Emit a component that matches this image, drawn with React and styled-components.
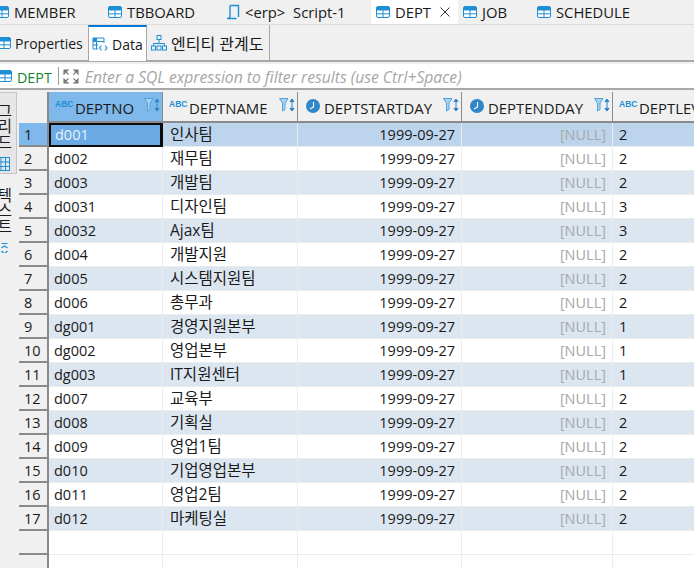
import React from "react";
import styled, { createGlobalStyle } from "styled-components";

const FONT = `"Open Sans", "Noto Sans CJK KR", sans-serif`;

const GlobalStyle = createGlobalStyle`
  html, body {
    margin: 0;
    padding: 0;
    background: #f0f0f0;
  }
  * {
    box-sizing: border-box;
  }
`;

const Page = styled.div`
  width: 694px;
  height: 568px;
  overflow: hidden;
  display: flex;
  flex-direction: column;
  background: #f0f0f0;
  color: #1a1a1a;
  font-family: ${FONT};
  font-size: 14.5px;
`;

const Glyph = styled.svg`
  flex: none;
`;

const EditorTabs = styled.div`
  display: flex;
  height: 25px;
  margin-left: -10px;
  flex: none;
  border-bottom: 1px solid #dcdcdc;
  font-size: 14.8px;
`;

const EditorTab = styled.div`
  width: ${(p) => p.$width}px;
  flex: none;
  display: flex;
  align-items: center;
  gap: 5px;
  padding-left: 5px;
  background: ${(p) => (p.$active ? "#fff" : "transparent")};
  white-space: pre;
`;

const CloseMark = styled(Glyph)`
  margin-left: 4px;
`;

const ViewTabs = styled.div`
  display: flex;
  height: 37px;
  margin-left: -8px;
  flex: none;
  border-bottom: 2px solid #a8a8a8;
  font-size: 14px;
`;

const ViewTab = styled.div`
  width: ${(p) => p.$width}px;
  flex: none;
  display: flex;
  align-items: center;
  gap: 4px;
  padding-left: ${(p) => p.$pad}px;
  padding-top: ${(p) => (p.$active ? 0 : 1)}px;
  height: ${(p) => (p.$active ? 36 : 35)}px;
  background: ${(p) => (p.$active ? "#fff" : "transparent")};
  border-top: ${(p) => (p.$active ? "2px solid #0078d7" : "none")};
  border-left: ${(p) => (p.$active ? "1px solid #a8a8a8" : "none")};
  border-right: ${(p) => (p.$edge ? "1px solid #a8a8a8" : "none")};
  white-space: pre;
`;

const KoreanLabel = styled.span`
  font-size: 16px;
`;

const FilterBar = styled.div`
  display: flex;
  align-items: center;
  height: 26px;
  margin-top: 2px;
  margin-left: -2px;
  background: #fff;
  border-bottom: 2px solid #a8a8a8;
  flex: none;
`;

const FilterTable = styled.span`
  color: #12852c;
  margin: 2px 0 0 5px;
  font-size: 14.3px;
`;

const FilterDivider = styled.span`
  width: 1px;
  height: 18px;
  background: #9a9a9a;
  margin: 0 4px 0 6px;
`;

const FilterHint = styled.span`
  font-style: italic;
  color: #a6a6a6;
  margin: 2px 0 0 6px;
  font-size: 15.7px;
  white-space: pre;
`;

const Body = styled.div`
  flex: 1;
  display: flex;
  padding-top: 2px;
  min-height: 0;
`;

const SidePanel = styled.div`
  width: 19px;
  flex: none;
  display: flex;
  flex-direction: column;
`;

const SideTab = styled.div`
  width: 17px;
  height: ${(p) => p.$height}px;
  overflow: hidden;
  display: flex;
  flex-direction: column;
  align-items: flex-start;
  padding-top: ${(p) => p.$pad}px;
  background: ${(p) => (p.$active ? "#e6e6e6" : "transparent")};
  border: ${(p) => (p.$active ? "1px solid #c4c4c4" : "1px solid transparent")};
  border-left: none;
  margin-bottom: 8px;
`;

const SideLabel = styled.span`
  writing-mode: vertical-rl;
  font-size: 15.5px;
  line-height: 15px;
  margin-left: -4px;
  white-space: pre;
`;

const SideGridIcon = styled(Glyph)`
  margin: 7px 0 0 -4px;
`;

const SideArrowIcon = styled(Glyph)`
  margin: 9px 0 0 0;
`;

const Grid = styled.div`
  flex: 1;
  min-width: 0;
  overflow: hidden;
  display: flex;
  flex-direction: column;
  background: #fff;
`;

const Row = styled.div`
  display: flex;
  flex: none;
  height: ${(p) => p.$height}px;
`;

const Corner = styled.div`
  width: 30px;
  flex: none;
  background: #f0f0f0;
  border-right: 2px solid #8a8a8a;
`;

const RowNumber = styled(Corner)`
  background: ${(p) => (p.$selected ? "#7fb8ea" : "#f0f0f0")};
  border-bottom: 2px solid #8a8a8a;
  padding-left: 5px;
  line-height: 24px;
`;

const HeaderCell = styled.div`
  width: ${(p) => p.$width}px;
  flex: none;
  display: flex;
  align-items: center;
  gap: 4px;
  padding-left: ${(p) => (p.$date ? 8 : 6)}px;
  padding-top: 2px;
  position: relative;
  font-size: 14.9px;
  background: ${(p) => (p.$selected ? "#7fb8ea" : "#f0f0f0")};
  border-right: 1px solid #8a8a8a;
  border-bottom: 2px solid #8a8a8a;
  white-space: pre;
`;

const HeaderTools = styled.span`
  position: absolute;
  right: 2px;
  top: 6px;
  display: flex;
`;

const TypeBadge = styled.span`
  font-family: "Liberation Sans", sans-serif;
  font-size: 8.5px;
  line-height: 8px;
  font-weight: 700;
  color: #1c8fd6;
  margin-top: -7px;
  width: 16px;
`;

const ClockGlyph = styled(Glyph)`
  margin-top: -4px;
`;

const Cell = styled.div`
  width: ${(p) => p.$width}px;
  flex: none;
  padding: 0 6px 0 ${(p) => p.$pad ?? 6}px;
  line-height: ${(p) => (p.$korean ? 23 : 24)}px;
  text-align: ${(p) => (p.$right ? "right" : "left")};
  font-size: ${(p) => (p.$korean ? 15.5 : 14.5)}px;
  background: ${(p) => p.$bg};
  color: ${(p) => (p.$muted ? "#a8a8a8" : "#1a1a1a")};
  border-right: 1px solid #ececec;
  border-bottom: 1px solid #ececec;
  white-space: pre;
`;

const FocusCell = styled(Cell)`
  background: #6aa9e3;
  color: #e8f2fb;
  border: 2px solid #0c0c0c;
  border-right-width: 3px;
  line-height: 20px;
`;

const TableIcon = () => (
  <Glyph width="14" height="12" viewBox="0 0 14 12">
    <rect x="0.5" y="0.5" width="13" height="11" rx="1.5" fill="#fff" stroke="#1c8fd6" />
    <rect x="0.5" y="0.5" width="13" height="4" rx="1.5" fill="#1c8fd6" />
    <path d="M0.5 7.8H13.5M7 4V11.5" stroke="#1c8fd6" />
  </Glyph>
);

const ScriptIcon = () => (
  <Glyph width="14" height="16" viewBox="0 0 14 16">
    <path d="M4 1.5H12.5V13M4 1.5V12.5C4 14 3 14.5 1 14.5H10.5" fill="none" stroke="#1c8fd6" strokeWidth="1.4" />
  </Glyph>
);

const CloseIcon = () => (
  <CloseMark width="10" height="10" viewBox="0 0 10 10">
    <path d="M0.5 0.5L9.5 9.5M9.5 0.5L0.5 9.5" stroke="#333" />
  </CloseMark>
);

const DataIcon = () => (
  <Glyph width="16" height="15" viewBox="0 0 16 15">
    <path d="M1 1H12V6M1 1V12H6M1 4.5H12M4.5 1V12M1 8H6" fill="none" stroke="#1c8fd6" />
    <rect x="1" y="1" width="3.5" height="3.5" fill="#1c8fd6" />
    <path d="M9.5 8.5L7.5 11L9.5 13.5M13 8.5L15 11L13 13.5" fill="none" stroke="#1c8fd6" strokeWidth="1.2" />
  </Glyph>
);

const TreeIcon = () => (
  <Glyph width="16" height="16" viewBox="0 0 16 16">
    <rect x="6" y="0.5" width="4" height="4" fill="none" stroke="#1c8fd6" />
    <path d="M8 4.5V9M2.5 11V8.5H13.5V11" fill="none" stroke="#1c8fd6" />
    <rect x="0.5" y="11" width="4" height="4" fill="none" stroke="#1c8fd6" />
    <rect x="6" y="11" width="4" height="4" fill="none" stroke="#1c8fd6" />
    <rect x="11.5" y="11" width="4" height="4" fill="none" stroke="#1c8fd6" />
  </Glyph>
);

const ExpandIcon = () => (
  <Glyph width="16" height="15" viewBox="0 0 16 15">
    <path
      d="M1 1L5.5 5.5M1 1H5L1 5ZM15 1L10.5 5.5M15 1H11L15 5ZM1 14L5.5 9.5M1 14H5L1 10ZM15 14L10.5 9.5M15 14H11L15 10Z"
      fill="#777"
      stroke="#777"
      strokeWidth="1.1"
    />
  </Glyph>
);

const ClockIcon = () => (
  <ClockGlyph width="14" height="14" viewBox="0 0 14 14">
    <circle cx="7" cy="7" r="7" fill="#2f86c9" />
    <path d="M7.5 3V8L4 10" fill="none" stroke="#fff" strokeWidth="1.1" />
  </ClockGlyph>
);

const FilterSortIcon = () => (
  <Glyph width="16" height="14" viewBox="0 0 16 14">
    <path d="M0.5 0.5H9L6 5V11.5L3.5 13V5Z" fill="#a9d3ef" stroke="#4ea3da" />
    <path d="M13 1V13M13 1L11 3.6H15ZM13 13L11 10.4H15Z" fill="#2f86c9" stroke="#2f86c9" strokeWidth="1" />
  </Glyph>
);

const GridTinyIcon = () => (
  <SideGridIcon width="14" height="14" viewBox="0 0 14 14">
    <rect x="0.5" y="0.5" width="13" height="13" fill="none" stroke="#1c8fd6" />
    <path d="M0.5 5H13.5M0.5 9.5H13.5M5 0.5V13.5M9.5 0.5V13.5" stroke="#1c8fd6" />
  </SideGridIcon>
);

const UpDownIcon = () => (
  <SideArrowIcon width="9" height="12" viewBox="0 0 9 12">
    <path d="M1.5 0.5H7.5" stroke="#1c8fd6" />
    <path d="M1.5 5L4.5 3L7.5 5M1.5 8L4.5 11L7.5 8" fill="none" stroke="#1c8fd6" strokeWidth="1.2" />
  </SideArrowIcon>
);

const COLUMNS = [
  { name: "DEPTNO", kind: "abc", width: 114 },
  { name: "DEPTNAME", kind: "abc", width: 135 },
  { name: "DEPTSTARTDAY", kind: "date", width: 164 },
  { name: "DEPTENDDAY", kind: "date", width: 151 },
  { name: "DEPTLEVEL", kind: "abc", width: 110 },
];

const DEPTS = [
  ["d001", "인사팀", 2],
  ["d002", "재무팀", 2],
  ["d003", "개발팀", 2],
  ["d0031", "디자인팀", 3],
  ["d0032", "Ajax팀", 3],
  ["d004", "개발지원", 2],
  ["d005", "시스템지원팀", 2],
  ["d006", "총무과", 2],
  ["dg001", "경영지원본부", 1],
  ["dg002", "영업본부", 1],
  ["dg003", "IT지원센터", 1],
  ["d007", "교육부", 2],
  ["d008", "기획실", 2],
  ["d009", "영업1팀", 2],
  ["d010", "기업영업본부", 2],
  ["d011", "영업2팀", 2],
  ["d012", "마케팅실", 2],
];

const rowColor = (index) => {
  if (index === 0) return "#bdd5ec";
  return index % 2 === 0 ? "#dce6f1" : "#fff";
};

export default function App() {
  return (
    <Page>
      <GlobalStyle />
      <EditorTabs>
        <EditorTab $width={113}><TableIcon />MEMBER</EditorTab>
        <EditorTab $width={118}><TableIcon />TBBOARD</EditorTab>
        <EditorTab $width={150}><ScriptIcon />{"<erp>  Script-1"}</EditorTab>
        <EditorTab $width={87} $active><TableIcon />DEPT<CloseIcon /></EditorTab>
        <EditorTab $width={74}><TableIcon />JOB</EditorTab>
        <EditorTab $width={160}><TableIcon />SCHEDULE</EditorTab>
      </EditorTabs>
      <ViewTabs>
        <ViewTab $width={96} $pad={5}><TableIcon />Properties</ViewTab>
        <ViewTab $width={59} $pad={3} $active $edge><DataIcon />Data</ViewTab>
        <ViewTab $width={123} $pad={4} $edge><TreeIcon /><KoreanLabel>엔티티 관계도</KoreanLabel></ViewTab>
      </ViewTabs>
      <FilterBar>
        <TableIcon />
        <FilterTable>DEPT</FilterTable>
        <FilterDivider />
        <ExpandIcon />
        <FilterHint>Enter a SQL expression to filter results (use Ctrl+Space)</FilterHint>
      </FilterBar>
      <Body>
        <SidePanel>
          <SideTab $active $height={82} $pad={10}>
            <SideLabel>그리드</SideLabel>
            <GridTinyIcon />
          </SideTab>
          <SideTab $height={72} $pad={4}>
            <SideLabel>텍스트</SideLabel>
            <UpDownIcon />
          </SideTab>
        </SidePanel>
        <Grid>
          <Row $height={31}>
            <Corner />
            {COLUMNS.map((col, i) => (
              <HeaderCell key={col.name} $width={col.width} $selected={i === 0} $date={col.kind === "date"}>
                {col.kind === "abc" ? <TypeBadge>ABC</TypeBadge> : <ClockIcon />}
                {col.name}
                {i < 4 && (
                  <HeaderTools>
                    <FilterSortIcon />
                  </HeaderTools>
                )}
              </HeaderCell>
            ))}
          </Row>
          {DEPTS.map(([no, name, level], i) => (
            <Row $height={24} key={no}>
              <RowNumber $selected={i === 0}>{i + 1}</RowNumber>
              {i === 0 ? (
                <FocusCell $width={114} $pad={4}>{no}</FocusCell>
              ) : (
                <Cell $width={114} $pad={5} $bg={rowColor(i)}>{no}</Cell>
              )}
              <Cell $width={135} $pad={7} $bg={rowColor(i)} $korean>{name}</Cell>
              <Cell $width={164} $bg={rowColor(i)} $right>1999-09-27</Cell>
              <Cell $width={151} $bg={rowColor(i)} $right $muted>[NULL]</Cell>
              <Cell $width={110} $bg={rowColor(i)}>{level}</Cell>
            </Row>
          ))}
          <Row $height={24}>
            <RowNumber />
            {COLUMNS.map((col) => (
              <Cell key={col.name} $width={col.width} $bg="#fff" />
            ))}
          </Row>
          <Row $height={20}>
            <Corner />
            {COLUMNS.map((col) => (
              <Cell key={col.name} $width={col.width} $bg="#fff" />
            ))}
          </Row>
        </Grid>
      </Body>
    </Page>
  );
}
